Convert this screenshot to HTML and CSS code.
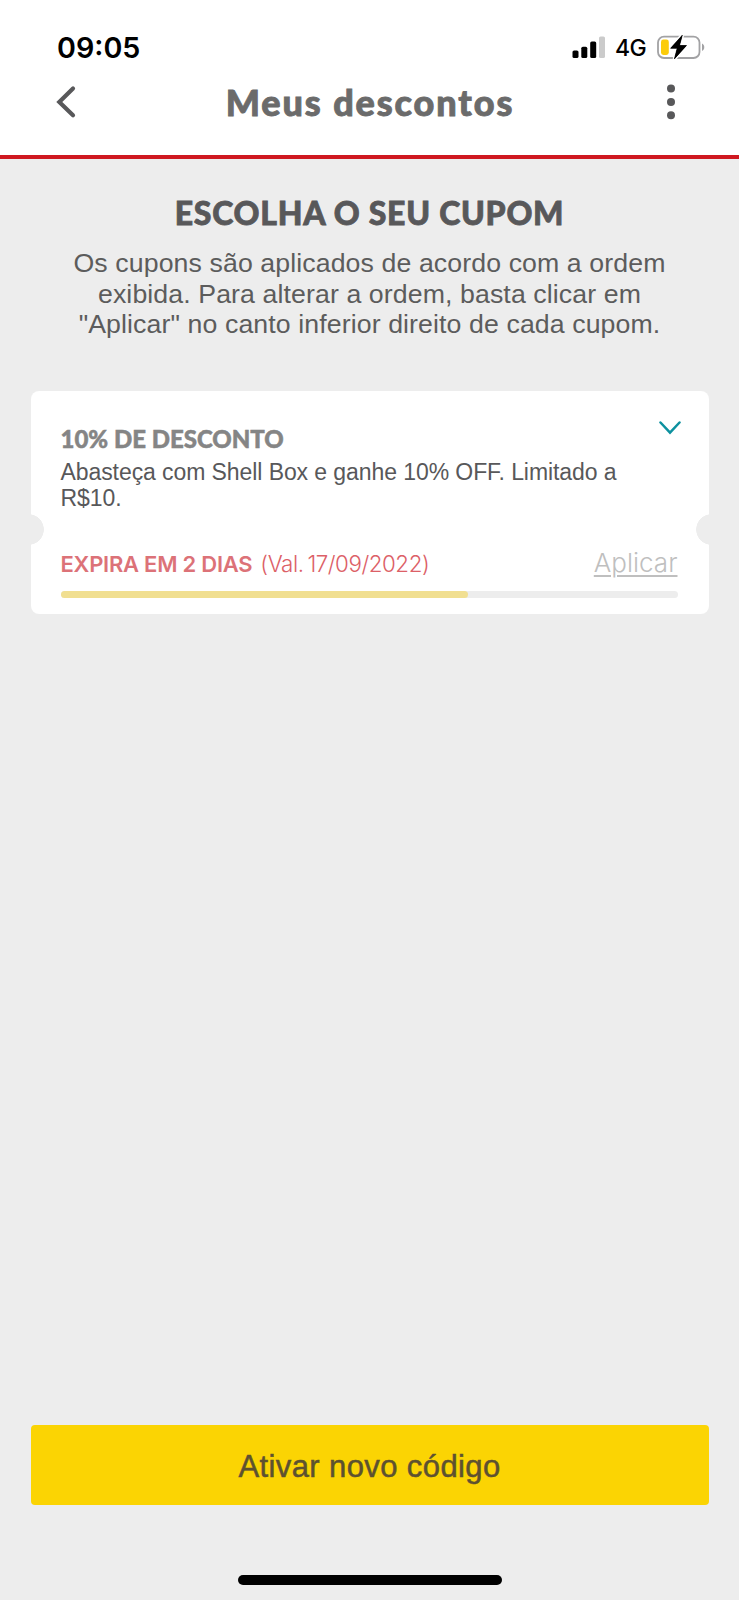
FILE: index.html
```html
<!DOCTYPE html>
<html lang="pt-BR">
<head>
<meta charset="utf-8">
<title>Meus descontos</title>
<link rel="stylesheet" href="styles.css">
</head>
<body>
<div class="screen">
  <header class="header">
    <div class="status">
      <span class="time">09:05</span>
      <div class="indicators">
        <svg class="signal" width="33" height="23" viewBox="0 0 33 23">
          <rect x="0.5" y="14.5" width="6" height="7.5" rx="1.6"/>
          <rect x="9.3" y="10.7" width="6" height="11.3" rx="1.6"/>
          <rect x="18.2" y="5.5" width="6" height="16.5" rx="1.6"/>
          <rect x="27" y="0.5" width="6" height="21.5" rx="1.6" fill="#cbcbcb"/>
        </svg>
        <span class="network">4G</span>
        <svg class="battery" width="48" height="26" viewBox="0 0 48 26">
          <rect x="1" y="2.6" width="41.5" height="21.4" rx="6" fill="none" stroke="#a2a2a4" stroke-width="1.8"/>
          <path d="M45 9.500c3 1.300 3 6.200 0 7.500z" fill="#a2a2a4"/>
          <path d="M25.300 1.200 13.600 14.300h6.600l-2.800 10.600L29.500 11.500h-7z" fill="#000" stroke="#fff" stroke-width="3.600" paint-order="stroke"/>
          <rect x="4" y="5.600" width="7.800" height="15.400" rx="2.400" fill="#fccc0a"/>
          <path d="M25.300 1.200 13.600 14.300h6.600l-2.800 10.600L29.500 11.500h-7z" fill="#000" stroke="#000" stroke-width="0.600" stroke-linejoin="round"/>
        </svg>
      </div>
    </div>
    <div class="navbar">
      <svg class="back" width="20" height="34" viewBox="0 0 20 34"><path d="M17 3.500 3.300 17 17 30.300" fill="none" stroke="#58585a" stroke-width="4.200" stroke-linecap="round"/></svg>
      <h1 class="title">Meus descontos</h1>
      <svg class="more" width="8" height="36" viewBox="0 0 8 36"><circle cx="4" cy="4.600" r="4"/><circle cx="4" cy="18" r="4"/><circle cx="4" cy="31.300" r="4"/></svg>
    </div>
  </header>
  <main class="content">
    <h2 class="heading">ESCOLHA O SEU CUPOM</h2>
    <p class="intro">Os cupons são aplicados de acordo com a ordem<br>exibida. Para alterar a ordem, basta clicar em<br>"Aplicar" no canto inferior direito de cada cupom.</p>
    <section class="coupon">
      <div class="coupon-head">
        <h3 class="coupon-title">10% DE DESCONTO</h3>
        <svg class="chevron" width="22" height="14" viewBox="0 0 22 14"><path d="M1.500 1.500 11 11.600l9.500-10.100" fill="none" stroke="#0d919f" stroke-width="2.500" stroke-linecap="round"/></svg>
      </div>
      <p class="coupon-text">Abasteça com Shell Box e ganhe 10% OFF. Limitado a<br>R$10.</p>
      <div class="coupon-foot">
        <strong class="expires">EXPIRA EM 2 DIAS</strong>
        <span class="valid">(Val. 17/09/2022)</span>
        <a class="apply">Aplicar</a>
      </div>
      <div class="bar"><div class="bar-fill"></div></div>
    </section>
    <button class="activate">Ativar novo código</button>
    <div class="home"></div>
  </main>
</div>
</body>
</html>
```
FILE: styles.css
```css
* { box-sizing: border-box; margin: 0; padding: 0; }
body { background: #ededed; font-family: "Liberation Sans", Arial, sans-serif; }
svg { display: block; flex: none; }
.screen { width: 739px; height: 1600px; display: flex; flex-direction: column; overflow: hidden; white-space: nowrap; }
.header { height: 159px; background: #fff; border-bottom: 4px solid #cf1820; }
.status { height: 80px; padding: 30px 34px 0 57px; display: flex; justify-content: space-between; align-items: flex-start; }
.time { font: 600 28.700px/36px Inter, sans-serif; color: #000; }
.indicators { display: flex; align-items: flex-start; padding-top: 4px; }
.signal { margin-top: 2px; }
.network { width: 31px; margin: 0 11px 0 10px; font: 500 23px/28px Inter, sans-serif; color: #000; letter-spacing: -0.5px; }
.navbar { height: 75px; padding: 0 64px 0 56px; display: flex; justify-content: space-between; align-items: flex-start; }
.back { margin-top: 5px; }
.more { margin-top: 4px; fill: #58585a; }
.title { margin-right: 3px; font: 900 36px/45px Lato, sans-serif; color: #6b6b6b; letter-spacing: 1.900px; -webkit-text-stroke: 0.900px #6b6b6b; }
.content { flex: 1; display: flex; flex-direction: column; padding: 34px 30.500px 0; }
.heading { font: 900 32px/40px Lato, sans-serif; color: #58585a; text-align: center; letter-spacing: 0.750px; -webkit-text-stroke: 0.800px #58585a; }
.intro { margin-top: 15px; font-size: 26.700px; line-height: 30.700px; letter-spacing: 0.100px; color: #5c5c5c; text-align: center; }
.coupon { height: 223.500px; margin-top: 50.500px; padding: 28px 31px 0 30px; border-radius: 8px; color: #58585a;
  background: radial-gradient(circle at -2.500px 138.500px, #ededed 15px, transparent 15.600px), radial-gradient(circle at 680.500px 138.500px, #ededed 15px, transparent 15.600px), #fff; }
.coupon-head { height: 40.500px; display: flex; justify-content: space-between; align-items: flex-start; padding-top: 5.500px; }
.coupon-title { font: 900 24px/29px Lato, sans-serif; color: #858585; -webkit-text-stroke: 0.500px #858585; }
.chevron { margin: -3px -3px 0 0; }
.coupon-text { font-size: 23px; line-height: 26px; letter-spacing: -0.080px; }
.coupon-foot { display: flex; align-items: baseline; height: 53px; margin-top: 27px; }
.expires { font: 600 22px/50px Inter, sans-serif; color: #dc7278; letter-spacing: -0.250px; }
.valid { margin-left: 8px; font: 300 22.300px/50px Inter, sans-serif; color: #dc6067; letter-spacing: -0.430px; word-spacing: -2px; }
.apply { margin-left: auto; font: 300 26px/50px Inter, sans-serif; color: #bfbfbf; text-decoration: underline; text-decoration-thickness: 1.500px; text-underline-offset: 3px; }
.bar { height: 7px; border-radius: 4px; background: #ededed; }
.bar-fill { width: 407px; height: 7px; border-radius: 4px; background: #f1df91; }
.activate { height: 80px; margin-top: 811px; padding-top: 4px; border: 0; border-radius: 4px; background: #fbd403; color: #5d5130; font: 400 31px/40px "Liberation Sans", Arial, sans-serif; letter-spacing: 0.400px; -webkit-text-stroke: 0.500px #5d5130; }
.home { width: 264px; height: 10px; margin: 69.500px auto 0; border-radius: 5px; background: #000; }
```
